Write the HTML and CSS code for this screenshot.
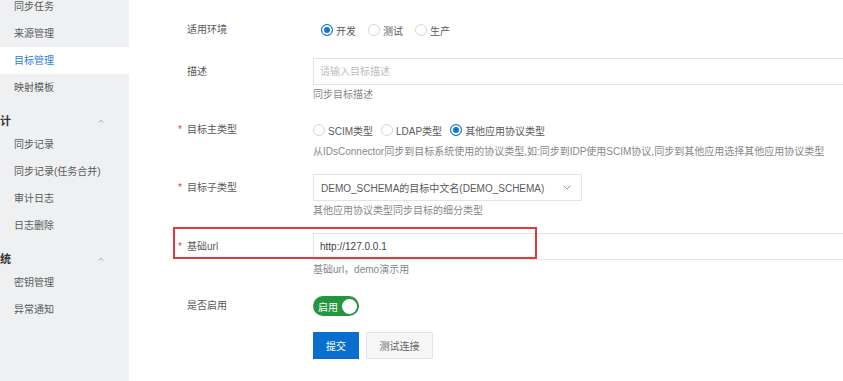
FILE: index.html
```html
<!DOCTYPE html>
<html lang="zh-CN">
<head>
    <meta charset="UTF-8">
    <meta name="viewport" content="width=device-width, initial-scale=1.0">
    <title>目标管理</title>
    <link rel="stylesheet" href="styles.css">
</head>
<body>
    <div class="layout">
        <aside class="sidebar">
            <ul class="menu first">
                <li class="menu-item">同步任务</li>
                <li class="menu-item">来源管理</li>
                <li class="menu-item active">目标管理</li>
                <li class="menu-item">映射模板</li>
            </ul>
            <div class="menu-group">
                <span class="group-title">计</span>
                <svg class="caret" viewBox="0 0 8 5"><path d="M1 4.5 4 1.5 7 4.5" fill="none" stroke="#888" stroke-width="1"/></svg>
            </div>
            <ul class="menu">
                <li class="menu-item">同步记录</li>
                <li class="menu-item">同步记录(任务合并)</li>
                <li class="menu-item">审计日志</li>
                <li class="menu-item">日志删除</li>
            </ul>
            <div class="menu-group">
                <span class="group-title">统</span>
                <svg class="caret" viewBox="0 0 8 5"><path d="M1 4.5 4 1.5 7 4.5" fill="none" stroke="#888" stroke-width="1"/></svg>
            </div>
            <ul class="menu">
                <li class="menu-item">密钥管理</li>
                <li class="menu-item">异常通知</li>
            </ul>
        </aside>

        <main class="content">
            <form class="target-form">
                <div class="form-row row-env">
                    <div class="form-label">适用环境</div>
                    <div class="form-control">
                        <div class="radio-group env">
                            <label class="radio"><span class="dot checked"></span>开发</label>
                            <label class="radio"><span class="dot"></span>测试</label>
                            <label class="radio"><span class="dot"></span>生产</label>
                        </div>
                    </div>
                </div>

                <div class="form-row row-desc">
                    <div class="form-label tall">描述</div>
                    <div class="form-control">
                        <input class="text-input" type="text" placeholder="请输入目标描述">
                        <div class="help">同步目标描述</div>
                    </div>
                </div>

                <div class="form-row row-type">
                    <div class="form-label"><span class="req">*</span>目标主类型</div>
                    <div class="form-control">
                        <div class="radio-group">
                            <label class="radio"><span class="dot"></span>SCIM类型</label>
                            <label class="radio"><span class="dot"></span>LDAP类型</label>
                            <label class="radio"><span class="dot checked"></span>其他应用协议类型</label>
                        </div>
                        <div class="help spaced">从IDsConnector同步到目标系统使用的协议类型,如:同步到IDP使用SCIM协议,同步到其他应用选择其他应用协议类型</div>
                    </div>
                </div>

                <div class="form-row row-subtype">
                    <div class="form-label tall"><span class="req">*</span>目标子类型</div>
                    <div class="form-control">
                        <div class="select">
                            <span>DEMO_SCHEMA的目标中文名(DEMO_SCHEMA)</span>
                            <svg class="chevron" viewBox="0 0 8 5"><path d="M0.5 0.5 4 4 7.5 0.5" fill="none" stroke="#999" stroke-width="1"/></svg>
                        </div>
                        <div class="help">其他应用协议类型同步目标的细分类型</div>
                    </div>
                </div>

                <div class="form-row row-url">
                    <div class="form-label tall"><span class="req">*</span>基础url</div>
                    <div class="form-control">
                        <input class="text-input" type="text" value="http://127.0.0.1">
                        <div class="help">基础url，demo演示用</div>
                    </div>
                    <div class="highlight-box"></div>
                </div>

                <div class="form-row row-enable">
                    <div class="form-label">是否启用</div>
                    <div class="form-control">
                        <span class="switch on"><span class="switch-text">启用</span><span class="knob"></span></span>
                    </div>
                </div>

                <div class="form-row row-actions">
                    <div class="form-label"></div>
                    <div class="form-control actions">
                        <button type="button" class="btn btn-primary">提交</button>
                        <button type="button" class="btn btn-default">测试连接</button>
                    </div>
                </div>
            </form>
        </main>
    </div>
</body>
</html>
```

FILE: styles.css
```css
* {
    box-sizing: border-box;
    font-family: 'Liberation Sans', 'Noto Sans CJK SC', sans-serif;
}

body {
    margin: 0;
    padding: 0;
    height: 100vh;
    overflow: hidden;
    font-size: 10px;
    color: #5a5a5a;
}

.layout {
    display: flex;
    height: 100vh;
}

/* sidebar */
.sidebar {
    width: 129px;
    flex-shrink: 0;
    background: #eef0f2;
    overflow: hidden;
}

.menu {
    list-style: none;
    margin: 0;
    padding: 0;
}

.menu.first {
    margin-top: -7px;
}

.menu-item {
    height: 27px;
    line-height: 27px;
    padding-left: 14px;
    color: #5a5a5a;
    white-space: nowrap;
}

.menu-item.active {
    background: #fff;
    color: #2a7bd0;
}

.menu-group {
    height: 30px;
    padding-top: 10px;
    display: flex;
    align-items: center;
    justify-content: space-between;
    padding-right: 25px;
}

.group-title {
    line-height: 15px;
    font-size: 11px;
    font-weight: bold;
    color: #333;
}

.caret {
    width: 6px;
    height: 4px;
}

/* form */
.content {
    flex: 1;
    background: #fff;
    padding: 20px 0 0 31px;
    overflow: hidden;
}

.form-row {
    display: flex;
    align-items: flex-start;
    position: relative;
}

.form-label {
    width: 153px;
    flex-shrink: 0;
    padding-left: 27px;
    line-height: 20px;
    color: #5a5a5a;
    white-space: nowrap;
}

.form-label.tall {
    line-height: 27px;
}

.req {
    display: inline-block;
    width: 9px;
    margin-left: -9px;
    color: #e5433d;
}

.form-control {
    flex: 1;
    min-width: 0;
}

.row-env { margin-bottom: 18px; }
.row-desc { margin-bottom: 16px; }
.row-type { margin-bottom: 13px; }
.row-subtype { margin-bottom: 13px; }
.row-url { margin-bottom: 17px; }
.row-enable { margin-bottom: 16px; }

.help {
    line-height: 18px;
    margin-top: 1px;
    color: #888;
    white-space: nowrap;
}

.help.spaced {
    margin-top: 3px;
}

.radio-group {
    display: flex;
    align-items: center;
    height: 20px;
    gap: 8px;
}

.radio-group.env {
    margin-left: 8px;
    gap: 12px;
}

.radio {
    display: inline-flex;
    align-items: center;
    gap: 3px;
    color: #5a5a5a;
}

.dot {
    width: 12px;
    height: 12px;
    border-radius: 50%;
    border: 1px solid #d6d6d6;
    background: #fff;
}

.dot.checked {
    border-color: #1677d2;
    background: #1677d2;
    box-shadow: inset 0 0 0 2px #fff;
}

.text-input {
    display: block;
    width: 560px;
    height: 27px;
    border: 1px solid #e3e3e3;
    padding: 0 6px;
    font-size: 10px;
    color: #444;
    outline: none;
}

.text-input::placeholder {
    color: #bdbdbd;
}

.select {
    width: 269px;
    height: 27px;
    border: 1px solid #e3e3e3;
    display: flex;
    align-items: center;
    justify-content: space-between;
    padding: 0 10px 0 7px;
    color: #5a5a5a;
}

.chevron {
    width: 8px;
    height: 5px;
}

.highlight-box {
    position: absolute;
    left: 13px;
    top: -6px;
    width: 364px;
    height: 32px;
    border: 2px solid #e0393e;
    pointer-events: none;
}

.switch {
    display: flex;
    align-items: center;
    justify-content: space-between;
    width: 46px;
    height: 20px;
    border-radius: 10px;
    padding: 0 2px 0 5px;
    background: #23963f;
}

.switch-text {
    color: #fff;
}

.knob {
    width: 15px;
    height: 15px;
    border-radius: 50%;
    background: #fff;
}

.actions {
    display: flex;
    gap: 7px;
}

.btn {
    height: 27px;
    font-size: 10px;
    padding: 0;
    cursor: pointer;
}

.btn-primary {
    width: 46px;
    background: #0a6ecf;
    color: #fff;
    border: none;
}

.btn-default {
    width: 67px;
    background: #f6f6f6;
    color: #666;
    border: 1px solid #e4e4e4;
    border-radius: 2px;
}
```
